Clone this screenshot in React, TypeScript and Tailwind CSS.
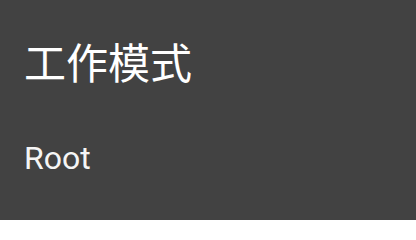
export default function App() {
  return (
    <div className="w-[416px] h-[220px] bg-[#424242] text-white px-6 pt-[39px] font-['Roboto','Noto_Sans_CJK_SC',sans-serif]">
      <h1 className="text-[42px] leading-[52px] font-normal">工作模式</h1>
      <p className="mt-[48px] text-[32px] leading-[38px] text-[#f5f5f5]">Root</p>
    </div>
  );
}
